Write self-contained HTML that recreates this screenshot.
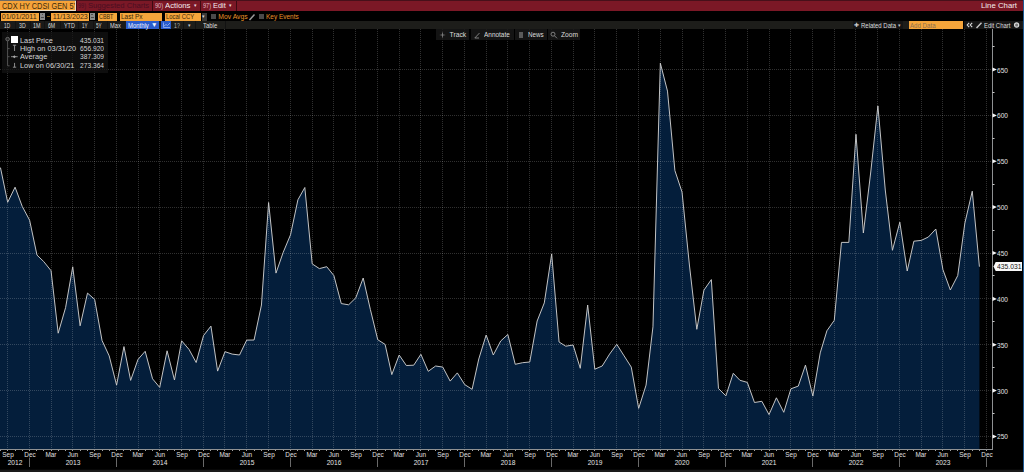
<!DOCTYPE html>
<html><head><meta charset="utf-8">
<style>
*{margin:0;padding:0;box-sizing:border-box}
html,body{width:1024px;height:472px;overflow:hidden;background:#000;font-family:"Liberation Sans",sans-serif;}
.t{position:absolute;white-space:nowrap;line-height:1;transform-origin:left top}
.b{position:absolute}
.ml{position:absolute;top:451px;width:30px;text-align:center;font-size:7.6px;line-height:8px;color:#d8d8d8;transform:scaleX(0.85)}
.yl{position:absolute;top:459px;width:40px;text-align:center;font-size:7.6px;line-height:8px;color:#e0e0e0;transform:scaleX(0.92)}
.rl{position:absolute;left:997px;font-size:7.6px;line-height:10px;color:#e0e0e0;transform:scaleX(0.9);transform-origin:left top}
svg{position:absolute;left:0;top:0}
</style></head><body>
<svg width="1024" height="472" viewBox="0 0 1024 472">
<path d="M0,449.5 L0,167.90 L0.53,167.90 L7.68,202.30 L15.07,187.20 L22.22,206.40 L29.60,220.20 L36.99,255.10 L43.66,261.50 L51.05,270.70 L58.20,333.20 L65.58,307.60 L72.73,266.80 L80.12,325.80 L87.51,293.10 L94.65,299.40 L102.04,340.50 L109.19,355.90 L116.58,385.10 L123.96,346.60 L130.64,380.40 L138.02,359.40 L145.17,351.30 L152.56,378.80 L159.71,387.40 L167.09,350.80 L174.48,380.00 L181.63,340.80 L189.01,349.40 L196.16,362.50 L203.55,335.50 L210.94,326.10 L217.61,371.10 L225.00,351.70 L232.14,354.10 L239.53,355.00 L246.68,340.10 L254.07,340.00 L261.45,305.00 L268.60,202.50 L275.99,273.10 L283.14,252.50 L290.52,234.80 L297.91,199.80 L304.82,187.50 L312.21,263.90 L319.36,268.60 L326.74,266.70 L333.89,275.60 L341.28,303.60 L348.67,304.80 L355.81,297.80 L363.20,278.00 L370.35,309.40 L377.74,339.70 L385.12,344.40 L391.80,374.60 L399.18,355.00 L406.33,365.50 L413.72,365.20 L420.87,354.30 L428.25,371.30 L435.64,366.00 L442.79,367.10 L450.18,381.10 L457.32,372.90 L464.71,384.60 L472.10,389.30 L478.77,359.00 L486.16,335.00 L493.30,355.00 L500.69,341.00 L507.84,334.50 L515.23,364.30 L522.61,362.70 L529.76,362.00 L537.15,321.00 L544.30,302.90 L551.68,254.00 L559.07,342.00 L565.74,346.20 L573.13,345.00 L580.28,368.30 L587.67,305.00 L594.81,369.20 L602.20,366.00 L609.59,354.10 L616.74,344.30 L624.12,355.90 L631.27,367.10 L638.66,408.40 L646.05,385.10 L652.96,326.80 L660.34,63.20 L667.49,91.10 L674.88,170.50 L682.03,192.00 L689.41,265.00 L696.80,329.30 L703.95,290.10 L711.34,279.60 L718.48,388.50 L725.87,395.90 L733.26,373.30 L739.93,380.30 L747.32,382.40 L754.47,402.50 L761.85,401.30 L769.00,414.60 L776.39,397.80 L783.77,412.30 L790.92,388.80 L798.31,386.10 L805.46,365.10 L812.85,396.10 L820.23,352.90 L826.90,330.80 L834.29,320.30 L841.44,242.40 L848.83,242.40 L855.97,134.30 L863.36,233.00 L870.75,172.00 L877.90,105.90 L885.28,190.00 L892.43,250.30 L899.82,222.20 L907.21,271.00 L913.88,241.20 L921.26,240.40 L928.41,237.00 L935.80,229.00 L942.95,269.70 L950.34,290.00 L957.72,275.60 L964.87,223.10 L972.26,191.20 L979.41,266.70 L979.41,449.5 Z" fill="#041e3b"/>
<g stroke="#ffffff" stroke-opacity="0.19" stroke-width="1" stroke-dasharray="1,1" shape-rendering="crispEdges"><line x1="7.5" y1="29" x2="7.5" y2="449.5"/><line x1="29.5" y1="29" x2="29.5" y2="449.5"/><line x1="51.5" y1="29" x2="51.5" y2="449.5"/><line x1="72.5" y1="29" x2="72.5" y2="449.5"/><line x1="94.5" y1="29" x2="94.5" y2="449.5"/><line x1="116.5" y1="29" x2="116.5" y2="449.5"/><line x1="138.5" y1="29" x2="138.5" y2="449.5"/><line x1="159.5" y1="29" x2="159.5" y2="449.5"/><line x1="181.5" y1="29" x2="181.5" y2="449.5"/><line x1="203.5" y1="29" x2="203.5" y2="449.5"/><line x1="224.5" y1="29" x2="224.5" y2="449.5"/><line x1="246.5" y1="29" x2="246.5" y2="449.5"/><line x1="268.5" y1="29" x2="268.5" y2="449.5"/><line x1="290.5" y1="29" x2="290.5" y2="449.5"/><line x1="312.5" y1="29" x2="312.5" y2="449.5"/><line x1="333.5" y1="29" x2="333.5" y2="449.5"/><line x1="355.5" y1="29" x2="355.5" y2="449.5"/><line x1="377.5" y1="29" x2="377.5" y2="449.5"/><line x1="399.5" y1="29" x2="399.5" y2="449.5"/><line x1="420.5" y1="29" x2="420.5" y2="449.5"/><line x1="442.5" y1="29" x2="442.5" y2="449.5"/><line x1="464.5" y1="29" x2="464.5" y2="449.5"/><line x1="486.5" y1="29" x2="486.5" y2="449.5"/><line x1="507.5" y1="29" x2="507.5" y2="449.5"/><line x1="529.5" y1="29" x2="529.5" y2="449.5"/><line x1="551.5" y1="29" x2="551.5" y2="449.5"/><line x1="573.5" y1="29" x2="573.5" y2="449.5"/><line x1="594.5" y1="29" x2="594.5" y2="449.5"/><line x1="616.5" y1="29" x2="616.5" y2="449.5"/><line x1="638.5" y1="29" x2="638.5" y2="449.5"/><line x1="660.5" y1="29" x2="660.5" y2="449.5"/><line x1="682.5" y1="29" x2="682.5" y2="449.5"/><line x1="703.5" y1="29" x2="703.5" y2="449.5"/><line x1="725.5" y1="29" x2="725.5" y2="449.5"/><line x1="747.5" y1="29" x2="747.5" y2="449.5"/><line x1="769.5" y1="29" x2="769.5" y2="449.5"/><line x1="790.5" y1="29" x2="790.5" y2="449.5"/><line x1="812.5" y1="29" x2="812.5" y2="449.5"/><line x1="834.5" y1="29" x2="834.5" y2="449.5"/><line x1="855.5" y1="29" x2="855.5" y2="449.5"/><line x1="877.5" y1="29" x2="877.5" y2="449.5"/><line x1="899.5" y1="29" x2="899.5" y2="449.5"/><line x1="921.5" y1="29" x2="921.5" y2="449.5"/><line x1="942.5" y1="29" x2="942.5" y2="449.5"/><line x1="964.5" y1="29" x2="964.5" y2="449.5"/><line x1="986.5" y1="29" x2="986.5" y2="449.5"/><line x1="0" y1="436.5" x2="992.5" y2="436.5"/><line x1="0" y1="390.5" x2="992.5" y2="390.5"/><line x1="0" y1="344.5" x2="992.5" y2="344.5"/><line x1="0" y1="298.5" x2="992.5" y2="298.5"/><line x1="0" y1="253.5" x2="992.5" y2="253.5"/><line x1="0" y1="207.5" x2="992.5" y2="207.5"/><line x1="0" y1="161.5" x2="992.5" y2="161.5"/><line x1="0" y1="115.5" x2="992.5" y2="115.5"/><line x1="0" y1="69.5" x2="992.5" y2="69.5"/></g>
<polyline points="0,167.90 0.53,167.90 7.68,202.30 15.07,187.20 22.22,206.40 29.60,220.20 36.99,255.10 43.66,261.50 51.05,270.70 58.20,333.20 65.58,307.60 72.73,266.80 80.12,325.80 87.51,293.10 94.65,299.40 102.04,340.50 109.19,355.90 116.58,385.10 123.96,346.60 130.64,380.40 138.02,359.40 145.17,351.30 152.56,378.80 159.71,387.40 167.09,350.80 174.48,380.00 181.63,340.80 189.01,349.40 196.16,362.50 203.55,335.50 210.94,326.10 217.61,371.10 225.00,351.70 232.14,354.10 239.53,355.00 246.68,340.10 254.07,340.00 261.45,305.00 268.60,202.50 275.99,273.10 283.14,252.50 290.52,234.80 297.91,199.80 304.82,187.50 312.21,263.90 319.36,268.60 326.74,266.70 333.89,275.60 341.28,303.60 348.67,304.80 355.81,297.80 363.20,278.00 370.35,309.40 377.74,339.70 385.12,344.40 391.80,374.60 399.18,355.00 406.33,365.50 413.72,365.20 420.87,354.30 428.25,371.30 435.64,366.00 442.79,367.10 450.18,381.10 457.32,372.90 464.71,384.60 472.10,389.30 478.77,359.00 486.16,335.00 493.30,355.00 500.69,341.00 507.84,334.50 515.23,364.30 522.61,362.70 529.76,362.00 537.15,321.00 544.30,302.90 551.68,254.00 559.07,342.00 565.74,346.20 573.13,345.00 580.28,368.30 587.67,305.00 594.81,369.20 602.20,366.00 609.59,354.10 616.74,344.30 624.12,355.90 631.27,367.10 638.66,408.40 646.05,385.10 652.96,326.80 660.34,63.20 667.49,91.10 674.88,170.50 682.03,192.00 689.41,265.00 696.80,329.30 703.95,290.10 711.34,279.60 718.48,388.50 725.87,395.90 733.26,373.30 739.93,380.30 747.32,382.40 754.47,402.50 761.85,401.30 769.00,414.60 776.39,397.80 783.77,412.30 790.92,388.80 798.31,386.10 805.46,365.10 812.85,396.10 820.23,352.90 826.90,330.80 834.29,320.30 841.44,242.40 848.83,242.40 855.97,134.30 863.36,233.00 870.75,172.00 877.90,105.90 885.28,190.00 892.43,250.30 899.82,222.20 907.21,271.00 913.88,241.20 921.26,240.40 928.41,237.00 935.80,229.00 942.95,269.70 950.34,290.00 957.72,275.60 964.87,223.10 972.26,191.20 979.41,266.70" fill="none" stroke="#cccccc" stroke-width="0.95" stroke-linejoin="round"/>
<line x1="0" y1="449.5" x2="993.0" y2="449.5" stroke="#8e9092" stroke-width="1" shape-rendering="crispEdges"/>
<line x1="992.5" y1="29" x2="992.5" y2="450.0" stroke="#8e9092" stroke-width="1" shape-rendering="crispEdges"/>
<g stroke="#a0a0a0" stroke-width="1"><line x1="0.5" y1="450.0" x2="0.5" y2="451.0"/><line x1="7.5" y1="450.0" x2="7.5" y2="451.0"/><line x1="15.5" y1="450.0" x2="15.5" y2="451.0"/><line x1="22.5" y1="450.0" x2="22.5" y2="451.0"/><line x1="29.5" y1="450.0" x2="29.5" y2="451.0"/><line x1="36.5" y1="450.0" x2="36.5" y2="451.0"/><line x1="43.5" y1="450.0" x2="43.5" y2="451.0"/><line x1="51.5" y1="450.0" x2="51.5" y2="451.0"/><line x1="58.5" y1="450.0" x2="58.5" y2="451.0"/><line x1="65.5" y1="450.0" x2="65.5" y2="451.0"/><line x1="72.5" y1="450.0" x2="72.5" y2="451.0"/><line x1="80.5" y1="450.0" x2="80.5" y2="451.0"/><line x1="87.5" y1="450.0" x2="87.5" y2="451.0"/><line x1="94.5" y1="450.0" x2="94.5" y2="451.0"/><line x1="102.5" y1="450.0" x2="102.5" y2="451.0"/><line x1="109.5" y1="450.0" x2="109.5" y2="451.0"/><line x1="116.5" y1="450.0" x2="116.5" y2="451.0"/><line x1="123.5" y1="450.0" x2="123.5" y2="451.0"/><line x1="130.5" y1="450.0" x2="130.5" y2="451.0"/><line x1="138.5" y1="450.0" x2="138.5" y2="451.0"/><line x1="145.5" y1="450.0" x2="145.5" y2="451.0"/><line x1="152.5" y1="450.0" x2="152.5" y2="451.0"/><line x1="159.5" y1="450.0" x2="159.5" y2="451.0"/><line x1="167.5" y1="450.0" x2="167.5" y2="451.0"/><line x1="174.5" y1="450.0" x2="174.5" y2="451.0"/><line x1="181.5" y1="450.0" x2="181.5" y2="451.0"/><line x1="189.5" y1="450.0" x2="189.5" y2="451.0"/><line x1="196.5" y1="450.0" x2="196.5" y2="451.0"/><line x1="203.5" y1="450.0" x2="203.5" y2="451.0"/><line x1="210.5" y1="450.0" x2="210.5" y2="451.0"/><line x1="217.5" y1="450.0" x2="217.5" y2="451.0"/><line x1="224.5" y1="450.0" x2="224.5" y2="451.0"/><line x1="232.5" y1="450.0" x2="232.5" y2="451.0"/><line x1="239.5" y1="450.0" x2="239.5" y2="451.0"/><line x1="246.5" y1="450.0" x2="246.5" y2="451.0"/><line x1="254.5" y1="450.0" x2="254.5" y2="451.0"/><line x1="261.5" y1="450.0" x2="261.5" y2="451.0"/><line x1="268.5" y1="450.0" x2="268.5" y2="451.0"/><line x1="275.5" y1="450.0" x2="275.5" y2="451.0"/><line x1="283.5" y1="450.0" x2="283.5" y2="451.0"/><line x1="290.5" y1="450.0" x2="290.5" y2="451.0"/><line x1="297.5" y1="450.0" x2="297.5" y2="451.0"/><line x1="304.5" y1="450.0" x2="304.5" y2="451.0"/><line x1="312.5" y1="450.0" x2="312.5" y2="451.0"/><line x1="319.5" y1="450.0" x2="319.5" y2="451.0"/><line x1="326.5" y1="450.0" x2="326.5" y2="451.0"/><line x1="333.5" y1="450.0" x2="333.5" y2="451.0"/><line x1="341.5" y1="450.0" x2="341.5" y2="451.0"/><line x1="348.5" y1="450.0" x2="348.5" y2="451.0"/><line x1="355.5" y1="450.0" x2="355.5" y2="451.0"/><line x1="363.5" y1="450.0" x2="363.5" y2="451.0"/><line x1="370.5" y1="450.0" x2="370.5" y2="451.0"/><line x1="377.5" y1="450.0" x2="377.5" y2="451.0"/><line x1="385.5" y1="450.0" x2="385.5" y2="451.0"/><line x1="391.5" y1="450.0" x2="391.5" y2="451.0"/><line x1="399.5" y1="450.0" x2="399.5" y2="451.0"/><line x1="406.5" y1="450.0" x2="406.5" y2="451.0"/><line x1="413.5" y1="450.0" x2="413.5" y2="451.0"/><line x1="420.5" y1="450.0" x2="420.5" y2="451.0"/><line x1="428.5" y1="450.0" x2="428.5" y2="451.0"/><line x1="435.5" y1="450.0" x2="435.5" y2="451.0"/><line x1="442.5" y1="450.0" x2="442.5" y2="451.0"/><line x1="450.5" y1="450.0" x2="450.5" y2="451.0"/><line x1="457.5" y1="450.0" x2="457.5" y2="451.0"/><line x1="464.5" y1="450.0" x2="464.5" y2="451.0"/><line x1="472.5" y1="450.0" x2="472.5" y2="451.0"/><line x1="478.5" y1="450.0" x2="478.5" y2="451.0"/><line x1="486.5" y1="450.0" x2="486.5" y2="451.0"/><line x1="493.5" y1="450.0" x2="493.5" y2="451.0"/><line x1="500.5" y1="450.0" x2="500.5" y2="451.0"/><line x1="507.5" y1="450.0" x2="507.5" y2="451.0"/><line x1="515.5" y1="450.0" x2="515.5" y2="451.0"/><line x1="522.5" y1="450.0" x2="522.5" y2="451.0"/><line x1="529.5" y1="450.0" x2="529.5" y2="451.0"/><line x1="537.5" y1="450.0" x2="537.5" y2="451.0"/><line x1="544.5" y1="450.0" x2="544.5" y2="451.0"/><line x1="551.5" y1="450.0" x2="551.5" y2="451.0"/><line x1="559.5" y1="450.0" x2="559.5" y2="451.0"/><line x1="565.5" y1="450.0" x2="565.5" y2="451.0"/><line x1="573.5" y1="450.0" x2="573.5" y2="451.0"/><line x1="580.5" y1="450.0" x2="580.5" y2="451.0"/><line x1="587.5" y1="450.0" x2="587.5" y2="451.0"/><line x1="594.5" y1="450.0" x2="594.5" y2="451.0"/><line x1="602.5" y1="450.0" x2="602.5" y2="451.0"/><line x1="609.5" y1="450.0" x2="609.5" y2="451.0"/><line x1="616.5" y1="450.0" x2="616.5" y2="451.0"/><line x1="624.5" y1="450.0" x2="624.5" y2="451.0"/><line x1="631.5" y1="450.0" x2="631.5" y2="451.0"/><line x1="638.5" y1="450.0" x2="638.5" y2="451.0"/><line x1="646.5" y1="450.0" x2="646.5" y2="451.0"/><line x1="652.5" y1="450.0" x2="652.5" y2="451.0"/><line x1="660.5" y1="450.0" x2="660.5" y2="451.0"/><line x1="667.5" y1="450.0" x2="667.5" y2="451.0"/><line x1="674.5" y1="450.0" x2="674.5" y2="451.0"/><line x1="682.5" y1="450.0" x2="682.5" y2="451.0"/><line x1="689.5" y1="450.0" x2="689.5" y2="451.0"/><line x1="696.5" y1="450.0" x2="696.5" y2="451.0"/><line x1="703.5" y1="450.0" x2="703.5" y2="451.0"/><line x1="711.5" y1="450.0" x2="711.5" y2="451.0"/><line x1="718.5" y1="450.0" x2="718.5" y2="451.0"/><line x1="725.5" y1="450.0" x2="725.5" y2="451.0"/><line x1="733.5" y1="450.0" x2="733.5" y2="451.0"/><line x1="739.5" y1="450.0" x2="739.5" y2="451.0"/><line x1="747.5" y1="450.0" x2="747.5" y2="451.0"/><line x1="754.5" y1="450.0" x2="754.5" y2="451.0"/><line x1="761.5" y1="450.0" x2="761.5" y2="451.0"/><line x1="769.5" y1="450.0" x2="769.5" y2="451.0"/><line x1="776.5" y1="450.0" x2="776.5" y2="451.0"/><line x1="783.5" y1="450.0" x2="783.5" y2="451.0"/><line x1="790.5" y1="450.0" x2="790.5" y2="451.0"/><line x1="798.5" y1="450.0" x2="798.5" y2="451.0"/><line x1="805.5" y1="450.0" x2="805.5" y2="451.0"/><line x1="812.5" y1="450.0" x2="812.5" y2="451.0"/><line x1="820.5" y1="450.0" x2="820.5" y2="451.0"/><line x1="826.5" y1="450.0" x2="826.5" y2="451.0"/><line x1="834.5" y1="450.0" x2="834.5" y2="451.0"/><line x1="841.5" y1="450.0" x2="841.5" y2="451.0"/><line x1="848.5" y1="450.0" x2="848.5" y2="451.0"/><line x1="855.5" y1="450.0" x2="855.5" y2="451.0"/><line x1="863.5" y1="450.0" x2="863.5" y2="451.0"/><line x1="870.5" y1="450.0" x2="870.5" y2="451.0"/><line x1="877.5" y1="450.0" x2="877.5" y2="451.0"/><line x1="885.5" y1="450.0" x2="885.5" y2="451.0"/><line x1="892.5" y1="450.0" x2="892.5" y2="451.0"/><line x1="899.5" y1="450.0" x2="899.5" y2="451.0"/><line x1="907.5" y1="450.0" x2="907.5" y2="451.0"/><line x1="913.5" y1="450.0" x2="913.5" y2="451.0"/><line x1="921.5" y1="450.0" x2="921.5" y2="451.0"/><line x1="928.5" y1="450.0" x2="928.5" y2="451.0"/><line x1="935.5" y1="450.0" x2="935.5" y2="451.0"/><line x1="942.5" y1="450.0" x2="942.5" y2="451.0"/><line x1="950.5" y1="450.0" x2="950.5" y2="451.0"/><line x1="957.5" y1="450.0" x2="957.5" y2="451.0"/><line x1="964.5" y1="450.0" x2="964.5" y2="451.0"/><line x1="972.5" y1="450.0" x2="972.5" y2="451.0"/><line x1="979.5" y1="450.0" x2="979.5" y2="451.0"/><line x1="986.5" y1="450.0" x2="986.5" y2="451.0"/></g>
<path d="M992.5,434.40 L996.9,436.50 L992.5,438.60 Z" fill="#f4f4f4"/><line x1="992.5" y1="413.5" x2="994.5" y2="413.5" stroke="#c8c8c8"/><path d="M992.5,388.52 L996.9,390.62 L992.5,392.73 Z" fill="#f4f4f4"/><line x1="992.5" y1="367.5" x2="994.5" y2="367.5" stroke="#c8c8c8"/><path d="M992.5,342.65 L996.9,344.75 L992.5,346.85 Z" fill="#f4f4f4"/><line x1="992.5" y1="321.5" x2="994.5" y2="321.5" stroke="#c8c8c8"/><path d="M992.5,296.77 L996.9,298.88 L992.5,300.98 Z" fill="#f4f4f4"/><line x1="992.5" y1="275.5" x2="994.5" y2="275.5" stroke="#c8c8c8"/><path d="M992.5,250.90 L996.9,253.00 L992.5,255.10 Z" fill="#f4f4f4"/><line x1="992.5" y1="230.5" x2="994.5" y2="230.5" stroke="#c8c8c8"/><path d="M992.5,205.03 L996.9,207.12 L992.5,209.22 Z" fill="#f4f4f4"/><line x1="992.5" y1="184.5" x2="994.5" y2="184.5" stroke="#c8c8c8"/><path d="M992.5,159.15 L996.9,161.25 L992.5,163.35 Z" fill="#f4f4f4"/><line x1="992.5" y1="138.5" x2="994.5" y2="138.5" stroke="#c8c8c8"/><path d="M992.5,113.28 L996.9,115.38 L992.5,117.47 Z" fill="#f4f4f4"/><line x1="992.5" y1="92.5" x2="994.5" y2="92.5" stroke="#c8c8c8"/><path d="M992.5,67.40 L996.9,69.50 L992.5,71.60 Z" fill="#f4f4f4"/><line x1="992.5" y1="46.5" x2="994.5" y2="46.5" stroke="#c8c8c8"/>
<line x1="29.5" y1="457.5" x2="29.5" y2="467" stroke="#6a6a6a" stroke-width="1"/>
<line x1="116.5" y1="457.5" x2="116.5" y2="467" stroke="#6a6a6a" stroke-width="1"/>
<line x1="203.5" y1="457.5" x2="203.5" y2="467" stroke="#6a6a6a" stroke-width="1"/>
<line x1="290.5" y1="457.5" x2="290.5" y2="467" stroke="#6a6a6a" stroke-width="1"/>
<line x1="377.5" y1="457.5" x2="377.5" y2="467" stroke="#6a6a6a" stroke-width="1"/>
<line x1="464.5" y1="457.5" x2="464.5" y2="467" stroke="#6a6a6a" stroke-width="1"/>
<line x1="551.5" y1="457.5" x2="551.5" y2="467" stroke="#6a6a6a" stroke-width="1"/>
<line x1="638.5" y1="457.5" x2="638.5" y2="467" stroke="#6a6a6a" stroke-width="1"/>
<line x1="725.5" y1="457.5" x2="725.5" y2="467" stroke="#6a6a6a" stroke-width="1"/>
<line x1="812.5" y1="457.5" x2="812.5" y2="467" stroke="#6a6a6a" stroke-width="1"/>
<line x1="899.5" y1="457.5" x2="899.5" y2="467" stroke="#6a6a6a" stroke-width="1"/>
<line x1="986.5" y1="457.5" x2="986.5" y2="467" stroke="#6a6a6a" stroke-width="1"/>
<rect x="0" y="469.7" width="1024" height="3" fill="#1a1a1a"/>
</svg>
<div class="t" style="left:-7.32px;width:30px;text-align:center;top:451.05px;font-size:7.8px;color:#e0e0e0;transform:scaleX(0.82);transform-origin:center top">Sep</div>
<div class="t" style="left:14.60px;width:30px;text-align:center;top:451.05px;font-size:7.8px;color:#e0e0e0;transform:scaleX(0.82);transform-origin:center top">Dec</div>
<div class="t" style="left:36.05px;width:30px;text-align:center;top:451.05px;font-size:7.8px;color:#e0e0e0;transform:scaleX(0.82);transform-origin:center top">Mar</div>
<div class="t" style="left:57.73px;width:30px;text-align:center;top:451.05px;font-size:7.8px;color:#e0e0e0;transform:scaleX(0.82);transform-origin:center top">Jun</div>
<div class="t" style="left:79.65px;width:30px;text-align:center;top:451.05px;font-size:7.8px;color:#e0e0e0;transform:scaleX(0.82);transform-origin:center top">Sep</div>
<div class="t" style="left:101.58px;width:30px;text-align:center;top:451.05px;font-size:7.8px;color:#e0e0e0;transform:scaleX(0.82);transform-origin:center top">Dec</div>
<div class="t" style="left:123.02px;width:30px;text-align:center;top:451.05px;font-size:7.8px;color:#e0e0e0;transform:scaleX(0.82);transform-origin:center top">Mar</div>
<div class="t" style="left:144.71px;width:30px;text-align:center;top:451.05px;font-size:7.8px;color:#e0e0e0;transform:scaleX(0.82);transform-origin:center top">Jun</div>
<div class="t" style="left:166.63px;width:30px;text-align:center;top:451.05px;font-size:7.8px;color:#e0e0e0;transform:scaleX(0.82);transform-origin:center top">Sep</div>
<div class="t" style="left:188.55px;width:30px;text-align:center;top:451.05px;font-size:7.8px;color:#e0e0e0;transform:scaleX(0.82);transform-origin:center top">Dec</div>
<div class="t" style="left:210.00px;width:30px;text-align:center;top:451.05px;font-size:7.8px;color:#e0e0e0;transform:scaleX(0.82);transform-origin:center top">Mar</div>
<div class="t" style="left:231.68px;width:30px;text-align:center;top:451.05px;font-size:7.8px;color:#e0e0e0;transform:scaleX(0.82);transform-origin:center top">Jun</div>
<div class="t" style="left:253.60px;width:30px;text-align:center;top:451.05px;font-size:7.8px;color:#e0e0e0;transform:scaleX(0.82);transform-origin:center top">Sep</div>
<div class="t" style="left:275.52px;width:30px;text-align:center;top:451.05px;font-size:7.8px;color:#e0e0e0;transform:scaleX(0.82);transform-origin:center top">Dec</div>
<div class="t" style="left:297.21px;width:30px;text-align:center;top:451.05px;font-size:7.8px;color:#e0e0e0;transform:scaleX(0.82);transform-origin:center top">Mar</div>
<div class="t" style="left:318.89px;width:30px;text-align:center;top:451.05px;font-size:7.8px;color:#e0e0e0;transform:scaleX(0.82);transform-origin:center top">Jun</div>
<div class="t" style="left:340.81px;width:30px;text-align:center;top:451.05px;font-size:7.8px;color:#e0e0e0;transform:scaleX(0.82);transform-origin:center top">Sep</div>
<div class="t" style="left:362.74px;width:30px;text-align:center;top:451.05px;font-size:7.8px;color:#e0e0e0;transform:scaleX(0.82);transform-origin:center top">Dec</div>
<div class="t" style="left:384.18px;width:30px;text-align:center;top:451.05px;font-size:7.8px;color:#e0e0e0;transform:scaleX(0.82);transform-origin:center top">Mar</div>
<div class="t" style="left:405.87px;width:30px;text-align:center;top:451.05px;font-size:7.8px;color:#e0e0e0;transform:scaleX(0.82);transform-origin:center top">Jun</div>
<div class="t" style="left:427.79px;width:30px;text-align:center;top:451.05px;font-size:7.8px;color:#e0e0e0;transform:scaleX(0.82);transform-origin:center top">Sep</div>
<div class="t" style="left:449.71px;width:30px;text-align:center;top:451.05px;font-size:7.8px;color:#e0e0e0;transform:scaleX(0.82);transform-origin:center top">Dec</div>
<div class="t" style="left:471.16px;width:30px;text-align:center;top:451.05px;font-size:7.8px;color:#e0e0e0;transform:scaleX(0.82);transform-origin:center top">Mar</div>
<div class="t" style="left:492.84px;width:30px;text-align:center;top:451.05px;font-size:7.8px;color:#e0e0e0;transform:scaleX(0.82);transform-origin:center top">Jun</div>
<div class="t" style="left:514.76px;width:30px;text-align:center;top:451.05px;font-size:7.8px;color:#e0e0e0;transform:scaleX(0.82);transform-origin:center top">Sep</div>
<div class="t" style="left:536.68px;width:30px;text-align:center;top:451.05px;font-size:7.8px;color:#e0e0e0;transform:scaleX(0.82);transform-origin:center top">Dec</div>
<div class="t" style="left:558.13px;width:30px;text-align:center;top:451.05px;font-size:7.8px;color:#e0e0e0;transform:scaleX(0.82);transform-origin:center top">Mar</div>
<div class="t" style="left:579.81px;width:30px;text-align:center;top:451.05px;font-size:7.8px;color:#e0e0e0;transform:scaleX(0.82);transform-origin:center top">Jun</div>
<div class="t" style="left:601.74px;width:30px;text-align:center;top:451.05px;font-size:7.8px;color:#e0e0e0;transform:scaleX(0.82);transform-origin:center top">Sep</div>
<div class="t" style="left:623.66px;width:30px;text-align:center;top:451.05px;font-size:7.8px;color:#e0e0e0;transform:scaleX(0.82);transform-origin:center top">Dec</div>
<div class="t" style="left:645.34px;width:30px;text-align:center;top:451.05px;font-size:7.8px;color:#e0e0e0;transform:scaleX(0.82);transform-origin:center top">Mar</div>
<div class="t" style="left:667.03px;width:30px;text-align:center;top:451.05px;font-size:7.8px;color:#e0e0e0;transform:scaleX(0.82);transform-origin:center top">Jun</div>
<div class="t" style="left:688.95px;width:30px;text-align:center;top:451.05px;font-size:7.8px;color:#e0e0e0;transform:scaleX(0.82);transform-origin:center top">Sep</div>
<div class="t" style="left:710.87px;width:30px;text-align:center;top:451.05px;font-size:7.8px;color:#e0e0e0;transform:scaleX(0.82);transform-origin:center top">Dec</div>
<div class="t" style="left:732.32px;width:30px;text-align:center;top:451.05px;font-size:7.8px;color:#e0e0e0;transform:scaleX(0.82);transform-origin:center top">Mar</div>
<div class="t" style="left:754.00px;width:30px;text-align:center;top:451.05px;font-size:7.8px;color:#e0e0e0;transform:scaleX(0.82);transform-origin:center top">Jun</div>
<div class="t" style="left:775.92px;width:30px;text-align:center;top:451.05px;font-size:7.8px;color:#e0e0e0;transform:scaleX(0.82);transform-origin:center top">Sep</div>
<div class="t" style="left:797.85px;width:30px;text-align:center;top:451.05px;font-size:7.8px;color:#e0e0e0;transform:scaleX(0.82);transform-origin:center top">Dec</div>
<div class="t" style="left:819.29px;width:30px;text-align:center;top:451.05px;font-size:7.8px;color:#e0e0e0;transform:scaleX(0.82);transform-origin:center top">Mar</div>
<div class="t" style="left:840.97px;width:30px;text-align:center;top:451.05px;font-size:7.8px;color:#e0e0e0;transform:scaleX(0.82);transform-origin:center top">Jun</div>
<div class="t" style="left:862.90px;width:30px;text-align:center;top:451.05px;font-size:7.8px;color:#e0e0e0;transform:scaleX(0.82);transform-origin:center top">Sep</div>
<div class="t" style="left:884.82px;width:30px;text-align:center;top:451.05px;font-size:7.8px;color:#e0e0e0;transform:scaleX(0.82);transform-origin:center top">Dec</div>
<div class="t" style="left:906.26px;width:30px;text-align:center;top:451.05px;font-size:7.8px;color:#e0e0e0;transform:scaleX(0.82);transform-origin:center top">Mar</div>
<div class="t" style="left:927.95px;width:30px;text-align:center;top:451.05px;font-size:7.8px;color:#e0e0e0;transform:scaleX(0.82);transform-origin:center top">Jun</div>
<div class="t" style="left:949.87px;width:30px;text-align:center;top:451.05px;font-size:7.8px;color:#e0e0e0;transform:scaleX(0.82);transform-origin:center top">Sep</div>
<div class="t" style="left:971.79px;width:30px;text-align:center;top:451.05px;font-size:7.8px;color:#e0e0e0;transform:scaleX(0.82);transform-origin:center top">Dec</div>
<div class="t" style="left:-5.20px;width:40px;text-align:center;top:459.15px;font-size:7.6px;color:#e4e4e4;transform:scaleX(0.87);transform-origin:center top">2012</div>
<div class="t" style="left:53.09px;width:40px;text-align:center;top:459.15px;font-size:7.6px;color:#e4e4e4;transform:scaleX(0.87);transform-origin:center top">2013</div>
<div class="t" style="left:140.06px;width:40px;text-align:center;top:459.15px;font-size:7.6px;color:#e4e4e4;transform:scaleX(0.87);transform-origin:center top">2014</div>
<div class="t" style="left:227.04px;width:40px;text-align:center;top:459.15px;font-size:7.6px;color:#e4e4e4;transform:scaleX(0.87);transform-origin:center top">2015</div>
<div class="t" style="left:314.13px;width:40px;text-align:center;top:459.15px;font-size:7.6px;color:#e4e4e4;transform:scaleX(0.87);transform-origin:center top">2016</div>
<div class="t" style="left:401.22px;width:40px;text-align:center;top:459.15px;font-size:7.6px;color:#e4e4e4;transform:scaleX(0.87);transform-origin:center top">2017</div>
<div class="t" style="left:488.20px;width:40px;text-align:center;top:459.15px;font-size:7.6px;color:#e4e4e4;transform:scaleX(0.87);transform-origin:center top">2018</div>
<div class="t" style="left:575.17px;width:40px;text-align:center;top:459.15px;font-size:7.6px;color:#e4e4e4;transform:scaleX(0.87);transform-origin:center top">2019</div>
<div class="t" style="left:662.26px;width:40px;text-align:center;top:459.15px;font-size:7.6px;color:#e4e4e4;transform:scaleX(0.87);transform-origin:center top">2020</div>
<div class="t" style="left:749.36px;width:40px;text-align:center;top:459.15px;font-size:7.6px;color:#e4e4e4;transform:scaleX(0.87);transform-origin:center top">2021</div>
<div class="t" style="left:836.33px;width:40px;text-align:center;top:459.15px;font-size:7.6px;color:#e4e4e4;transform:scaleX(0.87);transform-origin:center top">2022</div>
<div class="t" style="left:923.31px;width:40px;text-align:center;top:459.15px;font-size:7.6px;color:#e4e4e4;transform:scaleX(0.87);transform-origin:center top">2023</div>
<div class="t" style="left:997.0px;top:433.05px;font-size:7.8px;color:#e4e4e4;transform:scaleX(0.84)">250</div>
<div class="t" style="left:997.0px;top:388.05px;font-size:7.8px;color:#e4e4e4;transform:scaleX(0.84)">300</div>
<div class="t" style="left:997.0px;top:342.05px;font-size:7.8px;color:#e4e4e4;transform:scaleX(0.84)">350</div>
<div class="t" style="left:997.0px;top:296.05px;font-size:7.8px;color:#e4e4e4;transform:scaleX(0.84)">400</div>
<div class="t" style="left:997.0px;top:250.05px;font-size:7.8px;color:#e4e4e4;transform:scaleX(0.84)">450</div>
<div class="t" style="left:997.0px;top:204.05px;font-size:7.8px;color:#e4e4e4;transform:scaleX(0.84)">500</div>
<div class="t" style="left:997.0px;top:158.05px;font-size:7.8px;color:#e4e4e4;transform:scaleX(0.84)">550</div>
<div class="t" style="left:997.0px;top:112.05px;font-size:7.8px;color:#e4e4e4;transform:scaleX(0.84)">600</div>
<div class="t" style="left:997.0px;top:67.05px;font-size:7.8px;color:#e4e4e4;transform:scaleX(0.84)">650</div>
<div class="b" style="left:0px;top:0px;width:1022.50px;height:11.00px;background:#7b1826;"></div>
<div class="b" style="left:0px;top:0px;width:1022.50px;height:1.00px;background:#47101a;"></div>
<div class="b" style="left:0px;top:1px;width:75.50px;height:9.30px;background:#f5a33a;"></div>
<div class="b" style="left:0px;top:0px;width:76.00px;height:1.00px;background:#6e6a62;"></div>
<div class="b" style="left:0px;top:10.3px;width:76.00px;height:0.90px;background:#e8dcc8;"></div>
<div class="b" style="left:75.3px;top:1px;width:0.90px;height:10.20px;background:#e8dcc8;"></div>
<div class="b" style="left:0;top:0;width:75.3px;height:11px;overflow:hidden"><div class="t" style="left:1.60px;top:2.25px;font-size:8.4px;color:#3e2c0c;transform:scaleX(0.88);">CDX HY CDSI GEN 5Y</div></div>
<div class="t" style="left:78.30px;top:1.95px;font-size:8.0px;color:#4a0f22;transform:scaleX(0.7);">99)</div>
<div class="t" style="left:88.40px;top:1.95px;font-size:8.0px;color:#4a0f22;transform:scaleX(0.955);">Suggested Charts</div>
<div class="b" style="left:151.7px;top:1px;width:1.00px;height:10.00px;background:#3c0a12;"></div>
<div class="b" style="left:199.6px;top:1px;width:1.00px;height:10.00px;background:#3c0a12;"></div>
<div class="b" style="left:235.6px;top:1px;width:1.00px;height:10.00px;background:#3c0a12;"></div>
<div class="b" style="left:76.2px;top:1px;width:0.80px;height:10.00px;background:#3c0a12;"></div>
<div class="t" style="left:155.30px;top:1.95px;font-size:8.0px;color:#e2b8c4;transform:scaleX(0.7);">90)</div>
<div class="t" style="left:164.50px;top:1.95px;font-size:8.0px;color:#f4ecee;transform:scaleX(0.97);">Actions</div>
<div class="t" style="left:193.60px;top:2.95px;font-size:5px;color:#e8dde0;">&#9662;</div>
<div class="t" style="left:203.20px;top:1.95px;font-size:8.0px;color:#e2b8c4;transform:scaleX(0.7);">97)</div>
<div class="t" style="left:212.90px;top:1.95px;font-size:8.0px;color:#f4ecee;transform:scaleX(0.92);">Edit</div>
<div class="t" style="left:229.40px;top:2.95px;font-size:5px;color:#e8dde0;">&#9662;</div>
<div class="t" style="left:980.60px;top:1.95px;font-size:8.0px;color:#f4ecee;transform:scaleX(0.975);">Line Chart</div>
<div class="b" style="left:0.5px;top:12.9px;width:38.50px;height:7.70px;background:#f5a53b;"></div>
<div class="t" style="left:1.70px;top:13.90px;font-size:7.1px;color:#3a2a0c;">01/01/2011</div>
<div class="b" style="left:40.0px;top:13.2px;width:4.90px;height:7.00px;background:#8a8a8a;"></div>
<div class="b" style="left:41.6px;top:13.9px;width:1.70px;height:0.80px;background:#505050;"></div>
<div class="b" style="left:40.8px;top:16.8px;width:3.30px;height:1.40px;background:#4a4a4a;"></div>
<div class="b" style="left:47.2px;top:16.1px;width:3.00px;height:1.20px;background:#7a5416;"></div>
<div class="b" style="left:50.8px;top:12.9px;width:38.30px;height:7.70px;background:#f5a53b;"></div>
<div class="t" style="left:52.80px;top:13.90px;font-size:7.1px;color:#3a2a0c;">11/13/2023</div>
<div class="b" style="left:89.8px;top:13.2px;width:4.90px;height:7.00px;background:#8a8a8a;"></div>
<div class="b" style="left:91.39999999999999px;top:13.9px;width:1.70px;height:0.80px;background:#505050;"></div>
<div class="b" style="left:90.6px;top:16.8px;width:3.30px;height:1.40px;background:#4a4a4a;"></div>
<div class="b" style="left:97.9px;top:12.9px;width:18.80px;height:7.70px;background:#f5a53b;"></div>
<div class="t" style="left:98.70px;top:13.90px;font-size:7.1px;color:#3a2a0c;transform:scaleX(0.76);">CBBT</div>
<div class="b" style="left:119.8px;top:12.9px;width:42.60px;height:7.70px;background:#f5a53b;"></div>
<div class="t" style="left:121.00px;top:13.90px;font-size:7.1px;color:#3a2a0c;transform:scaleX(0.91);">Last Px</div>
<div class="b" style="left:165.3px;top:12.9px;width:35.80px;height:7.70px;background:#f5a53b;"></div>
<div class="t" style="left:166.10px;top:13.90px;font-size:7.1px;color:#3a2a0c;transform:scaleX(0.83);">Local CCY</div>
<div class="b" style="left:201.6px;top:12.9px;width:5.40px;height:7.70px;background:#3a3a3a;"></div>
<div class="t" style="left:202.20px;top:14.45px;font-size:5px;color:#d8d8d8;">&#9662;</div>
<div class="b" style="left:210.9px;top:14.4px;width:4.80px;height:4.90px;background:#4a4a4a;"></div>
<div class="t" style="left:218.30px;top:13.55px;font-size:6.8px;color:#e89328;">Mov Avgs</div>
<svg class="b" style="left:247.5px;top:13px" width="8" height="8"><path d="M1.5,7 L6.5,1.5" stroke="#9a9a9a" stroke-width="1.5"/></svg>
<div class="b" style="left:258.7px;top:14.4px;width:4.90px;height:4.90px;background:#4a4a4a;"></div>
<div class="t" style="left:266.10px;top:13.55px;font-size:6.8px;color:#e89328;transform:scaleX(0.95);">Key Events</div>
<div class="b" style="left:0px;top:21.2px;width:1022.50px;height:7.80px;background:#1d1d1a;"></div>
<div class="b" style="left:0px;top:21.2px;width:125.00px;height:7.80px;background:#1a1a19;"></div>
<div class="b" style="left:15.2px;top:21.2px;width:0.80px;height:7.80px;background:#121212;"></div>
<div class="b" style="left:29.8px;top:21.2px;width:0.80px;height:7.80px;background:#121212;"></div>
<div class="b" style="left:44.4px;top:21.2px;width:0.80px;height:7.80px;background:#121212;"></div>
<div class="b" style="left:59.7px;top:21.2px;width:0.80px;height:7.80px;background:#121212;"></div>
<div class="b" style="left:78px;top:21.2px;width:0.80px;height:7.80px;background:#121212;"></div>
<div class="b" style="left:92.7px;top:21.2px;width:0.80px;height:7.80px;background:#121212;"></div>
<div class="b" style="left:107.3px;top:21.2px;width:0.80px;height:7.80px;background:#121212;"></div>
<div class="b" style="left:183.4px;top:21.2px;width:0.80px;height:7.80px;background:#121212;"></div>
<div class="b" style="left:195.2px;top:21.2px;width:0.80px;height:7.80px;background:#121212;"></div>
<div class="b" style="left:224.7px;top:21.2px;width:0.80px;height:7.80px;background:#121212;"></div>
<div class="t" style="left:4.20px;top:22.65px;font-size:6.6px;color:#dcdcdc;transform:scaleX(0.72);">1D</div>
<div class="t" style="left:18.80px;top:22.65px;font-size:6.6px;color:#dcdcdc;transform:scaleX(0.79);">3D</div>
<div class="t" style="left:33.40px;top:22.65px;font-size:6.6px;color:#dcdcdc;transform:scaleX(0.82);">1M</div>
<div class="t" style="left:48.40px;top:22.65px;font-size:6.6px;color:#dcdcdc;transform:scaleX(0.78);">6M</div>
<div class="t" style="left:63.90px;top:22.65px;font-size:6.6px;color:#dcdcdc;transform:scaleX(0.82);">YTD</div>
<div class="t" style="left:82.30px;top:22.65px;font-size:6.6px;color:#dcdcdc;transform:scaleX(0.69);">1Y</div>
<div class="t" style="left:96.30px;top:22.65px;font-size:6.6px;color:#dcdcdc;transform:scaleX(0.69);">5Y</div>
<div class="t" style="left:110.20px;top:22.65px;font-size:6.6px;color:#dcdcdc;transform:scaleX(0.86);">Max</div>
<div class="b" style="left:125.9px;top:21.4px;width:32.80px;height:7.50px;background:#2a5ccc;"></div>
<div class="t" style="left:128.20px;top:22.65px;font-size:6.6px;color:#f0f4ff;transform:scaleX(0.9);">Monthly</div>
<div class="t" style="left:150.90px;top:22.25px;font-size:6.6px;color:#f0f4ff;">&#9660;</div>
<div class="b" style="left:161.4px;top:21.4px;width:9.60px;height:7.50px;background:#2a5ccc;"></div>
<svg class="b" style="left:162px;top:22px" width="9" height="7"><path d="M1.5,0.5 V5.5 H8" stroke="#9ab8f0" stroke-width="0.8" fill="none"/><path d="M2,4 L4,2.5 L5.5,3.5 L8,1" stroke="#9ab8f0" stroke-width="0.8" fill="none"/></svg>
<div class="t" style="left:173.50px;top:22.65px;font-size:6.6px;color:#b4b4b4;transform:scaleX(0.8);">1?</div>
<div class="t" style="left:188.20px;top:22.95px;font-size:5px;color:#c8c8c8;">&#9662;</div>
<div class="t" style="left:203.40px;top:22.65px;font-size:6.6px;color:#dcdcdc;transform:scaleX(0.9);">Table</div>
<div class="b" style="left:852.7px;top:21.2px;width:50.80px;height:7.80px;background:#141414;"></div>
<div class="t" style="left:854.40px;top:23.15px;font-size:5.6px;color:#c8c8c8;">&#10010;</div>
<div class="t" style="left:861.10px;top:22.65px;font-size:6.6px;color:#dcdcdc;transform:scaleX(0.91);">Related Data</div>
<div class="t" style="left:898.30px;top:22.95px;font-size:5px;color:#c8c8c8;">&#9662;</div>
<div class="b" style="left:903.5px;top:21.2px;width:5.30px;height:7.80px;background:#1d1d1a;"></div>
<div class="b" style="left:908.8px;top:20.9px;width:54.10px;height:7.70px;background:#f5a53b;"></div>
<div class="t" style="left:909.60px;top:22.65px;font-size:6.6px;color:#8c7050;transform:scaleX(0.93);">Add Data</div>
<div class="b" style="left:962.9px;top:20.9px;width:1.40px;height:8.10px;background:#000;"></div>
<div class="b" style="left:964.3px;top:21.2px;width:57.70px;height:7.80px;background:#161616;"></div>
<svg class="b" style="left:966px;top:22px" width="8" height="6"><path d="M3.2,0.8 L1.2,3 L3.2,5.2 M6.2,0.8 L4.2,3 L6.2,5.2" stroke="#e0e0e0" stroke-width="1.1" fill="none"/></svg>
<svg class="b" style="left:975px;top:21px" width="8" height="8"><path d="M1.5,7 L6.5,1.8" stroke="#c8c8c8" stroke-width="1.4"/></svg>
<div class="t" style="left:983.60px;top:22.65px;font-size:6.6px;color:#dcdcdc;transform:scaleX(0.9);">Edit Chart</div>
<svg class="b" style="left:1013px;top:22px" width="7" height="7"><circle cx="3.6" cy="3" r="2.1" stroke="#d8d8d8" stroke-width="1.2" fill="#777"/></svg>
<div class="b" style="left:1022.5px;top:0px;width:1.50px;height:472.00px;background:#1f5a94;"></div>
<div class="b" style="left:435.9px;top:29.2px;width:33.60px;height:11.10px;background:rgba(24,24,24,0.82);"></div>
<div class="b" style="left:470.5px;top:29.2px;width:43.20px;height:11.10px;background:rgba(24,24,24,0.82);"></div>
<div class="b" style="left:514.6px;top:29.2px;width:32.30px;height:11.10px;background:rgba(24,24,24,0.82);"></div>
<div class="b" style="left:547.9px;top:29.2px;width:32.20px;height:11.10px;background:rgba(24,24,24,0.82);"></div>
<svg class="b" style="left:439px;top:31px" width="7" height="8"><path d="M3.5,0.3 L4.1,3.4 L6.8,4 L4.1,4.6 L3.5,7.7 L2.9,4.6 L0.2,4 L2.9,3.4 Z" fill="#7a7a7a"/></svg>
<div class="t" style="left:449.50px;top:31.55px;font-size:6.8px;color:#dcdcdc;">Track</div>
<svg class="b" style="left:474px;top:31px" width="7" height="8"><path d="M0.8,7 L5.5,2 M0.8,7 H5" stroke="#8a8a8a" stroke-width="0.9" fill="none"/></svg>
<div class="t" style="left:484.30px;top:31.55px;font-size:6.8px;color:#dcdcdc;transform:scaleX(0.95);">Annotate</div>
<div class="b" style="left:518.5px;top:32px;width:4.50px;height:5.50px;background:#5a5a5a;"></div>
<div class="t" style="left:527.90px;top:31.55px;font-size:6.8px;color:#dcdcdc;transform:scaleX(0.92);">News</div>
<svg class="b" style="left:550px;top:31px" width="8" height="8"><circle cx="3" cy="3.2" r="2" stroke="#8a8a8a" stroke-width="0.9" fill="none"/><path d="M4.5,4.8 L7,7.3" stroke="#8a8a8a" stroke-width="0.9"/></svg>
<div class="t" style="left:560.60px;top:31.55px;font-size:6.8px;color:#dcdcdc;transform:scaleX(0.98);">Zoom</div>
<div class="b" style="left:2px;top:31.8px;width:105.60px;height:40.90px;background:rgba(20,20,20,0.72);"></div>
<svg class="b" style="left:0;top:30px" width="20" height="42"><circle cx="7.6" cy="9.1" r="1.8" stroke="#6a6a6a" stroke-width="1" fill="#2a2a2a"/><path d="M7.6,11 V35.8 M7.6,18.6 H9.6 M7.6,26.7 H9.6 M7.6,35.8 H9.6" stroke="#5a5a5a" stroke-width="0.9" fill="none"/><path d="M12.9,15.2 H16.2 M14.55,15.2 V21" stroke="#9a9a9a" stroke-width="0.9" fill="none"/><path d="M11,26.7 H17.7" stroke="#9a9a9a" stroke-width="0.9"/><path d="M14.3,25.2 L15.8,26.7 L14.3,28.2 L12.8,26.7 Z" fill="#aaaaaa"/><path d="M12.9,37.2 H16.2 M14.55,32.9 V37.2" stroke="#9a9a9a" stroke-width="0.9" fill="none"/></svg>
<div class="b" style="left:10.8px;top:36.2px;width:7.30px;height:6.70px;background:#ffffff;"></div>
<div class="t" style="left:19.60px;top:37.15px;font-size:7.6px;color:#d6d6d6;transform:scaleX(0.97);">Last Price</div>
<div class="t" style="left:59.60px;top:37.15px;font-size:7.6px;color:#d6d6d6;transform:scaleX(0.87);width:44px;text-align:right;transform-origin:right top;">435.031</div>
<div class="t" style="left:19.60px;top:45.15px;font-size:7.6px;color:#d6d6d6;transform:scaleX(0.97);">High on 03/31/20</div>
<div class="t" style="left:59.60px;top:45.15px;font-size:7.6px;color:#d6d6d6;transform:scaleX(0.87);width:44px;text-align:right;transform-origin:right top;">656.920</div>
<div class="t" style="left:19.60px;top:53.15px;font-size:7.6px;color:#d6d6d6;transform:scaleX(0.97);">Average</div>
<div class="t" style="left:59.60px;top:53.15px;font-size:7.6px;color:#d6d6d6;transform:scaleX(0.87);width:44px;text-align:right;transform-origin:right top;">387.309</div>
<div class="t" style="left:19.60px;top:62.15px;font-size:7.6px;color:#d6d6d6;transform:scaleX(0.97);">Low on 06/30/21</div>
<div class="t" style="left:59.60px;top:62.15px;font-size:7.6px;color:#d6d6d6;transform:scaleX(0.87);width:44px;text-align:right;transform-origin:right top;">273.364</div>
<svg class="b" style="left:988px;top:258px" width="36" height="16"><path d="M5.5,8.5 L7.7,4.1 H34 V13 H7.7 Z" fill="#f8f8f8"/></svg>
<div class="t" style="left:996.50px;top:263.35px;font-size:7.2px;color:#101010;transform:scaleX(0.94);">435.031</div>
</body></html>
